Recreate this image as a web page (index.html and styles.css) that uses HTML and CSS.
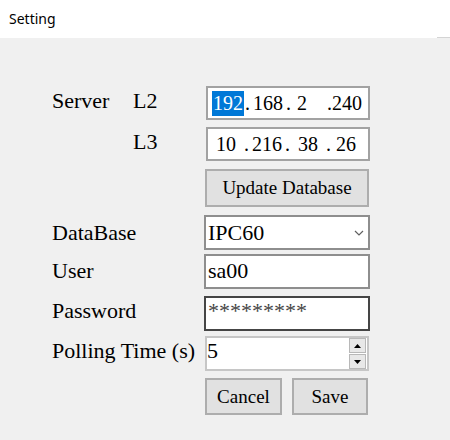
FILE: index.html
```html
<!DOCTYPE html>
<html lang="en">
<head>
<meta charset="utf-8">
<title>Setting</title>
<link rel="stylesheet" href="styles.css">
</head>
<body>
<header class="titlebar">Setting</header>
<main class="form">
  <span class="lbl lbl-ip">Server</span>
  <span class="lbl lbl-ip">L2</span>
  <div class="ip">
    <span class="seg seg-first"><span class="sel">192</span></span><span class="dot">.</span><span class="seg">168</span><span class="dot">.</span><span class="seg seg-left">2</span><span class="dot">.</span><span class="seg seg-last">240</span>
  </div>

  <span class="lbl lbl-ip col2">L3</span>
  <div class="ip">
    <span class="seg">10</span><span class="dot">.</span><span class="seg">216</span><span class="dot">.</span><span class="seg">38</span><span class="dot">.</span><span class="seg seg-last">26</span>
  </div>

  <button class="btn btn-update col3">Update Database</button>

  <span class="lbl lbl-wide">DataBase</span>
  <div class="field select">
    <span class="value">IPC60</span>
    <svg class="chev" width="10" height="6" viewBox="0 0 10 6"><polyline points="1,1 5,5 9,1" fill="none" stroke="#606060" stroke-width="1.2"/></svg>
  </div>

  <span class="lbl lbl-wide">User</span>
  <div class="field">sa00</div>

  <span class="lbl lbl-wide">Password</span>
  <div class="field field-pass">*********</div>

  <span class="lbl lbl-wide">Polling Time (s)</span>
  <div class="field field-spin">
    <span class="value">5</span>
    <span class="spin">
      <span class="spin-btn"><svg width="7" height="4" viewBox="0 0 7 4"><polygon points="0,4 3.5,0 7,4" fill="#000"/></svg></span>
      <span class="spin-btn"><svg width="7" height="4" viewBox="0 0 7 4"><polygon points="0,0 3.5,4 7,0" fill="#000"/></svg></span>
    </span>
  </div>

  <div class="actions col3">
    <button class="btn btn-cancel">Cancel</button>
    <button class="btn btn-save">Save</button>
  </div>
</main>
</body>
</html>
```

FILE: styles.css
```css
html, body {
  margin: 0;
  padding: 0;
  background: #f0f0f0;
  width: 450px;
  height: 440px;
  overflow: hidden;
}

.titlebar {
  position: relative;
  height: 38px;
  box-sizing: border-box;
  background: #ffffff;
  padding: 9px 0 0 9px;
  font-family: "Noto Sans", "Open Sans", sans-serif;
  font-size: 14px;
  line-height: 19px;
  color: #000;
}

.titlebar::after {
  content: "";
  position: absolute;
  right: 0;
  bottom: 0;
  width: 13px;
  height: 1px;
  background: #d4d4d4;
}

.form {
  display: grid;
  grid-template-columns: 81px 71px 166px;
  grid-template-rows: 41px 42px 46px 39px 42px 40px 42px 37px;
  padding: 48px 0 0 52px;
  font-family: "Liberation Serif", "Times New Roman", serif;
  color: #000;
}

.lbl {
  font-size: 22px;
  line-height: 25px;
  white-space: nowrap;
}

.lbl-ip {
  align-self: start;
  margin-top: 2px;
}

.lbl-wide {
  grid-column: 1 / 3;
  align-self: baseline;
  line-height: 22px;
}

.col2 { grid-column: 2; }
.col3 { grid-column: 3; }

.ip {
  grid-column: 3;
  align-self: start;
  margin-left: 2px;
  width: 164px;
  height: 34px;
  box-sizing: border-box;
  border: 2px solid #a2a2a2;
  background: #fff;
  display: flex;
  padding-top: 3px;
  font-size: 20px;
  line-height: 25px;
}

.seg {
  width: 36px;
  text-align: center;
}

.seg-first {
  padding-left: 3px;
  width: 37px;
  box-sizing: border-box;
}

.seg-left {
  text-align: left;
  padding-left: 6px;
  box-sizing: border-box;
}

.seg-last {
  width: 30px;
}

.dot {
  width: 5px;
}

.sel {
  background: #0078d7;
  color: #fff;
  padding: 0 1px;
  display: inline-block;
}

.btn {
  font-family: "Liberation Serif", "Times New Roman", serif;
  font-size: 19px;
  color: #000;
  background: #e1e1e1;
  border: 2px solid #adadad;
  margin: 0;
  padding: 0;
  box-sizing: border-box;
}

.btn-update {
  align-self: start;
  margin-left: 1px;
  width: 164px;
  height: 38px;
}

.field {
  grid-column: 3;
  align-self: baseline;
  width: 166px;
  height: 35px;
  box-sizing: border-box;
  border: 2px solid #8e8e8e;
  background: #fff;
  padding: 2px 0 0 2px;
  font-size: 22px;
  line-height: 25px;
}

.select {
  display: flex;
  align-items: baseline;
  justify-content: space-between;
  padding-top: 3px;
  padding-right: 4px;
}

.chev {
  align-self: center;
  margin-top: -2px;
}

.field-pass {
  border-color: #454545;
  padding-top: 0;
  color: #454545;
}

.field-spin {
  display: flex;
  align-items: flex-start;
  justify-content: space-between;
  margin-left: 1px;
  width: 164px;
  border-color: #c6c6c6;
  padding: 0 1px 0 0;
}

.spin {
  display: flex;
  flex-direction: column;
  gap: 1px;
}

.spin-btn {
  width: 17px;
  height: 15px;
  box-sizing: border-box;
  border: 1px solid #b8b8b8;
  background: #e8e8e8;
  display: flex;
  align-items: center;
  justify-content: center;
}

.actions {
  display: flex;
  gap: 10px;
  margin-left: 1px;
}

.btn-cancel {
  width: 77px;
  height: 37px;
}

.btn-save {
  width: 76px;
  height: 37px;
}
```
